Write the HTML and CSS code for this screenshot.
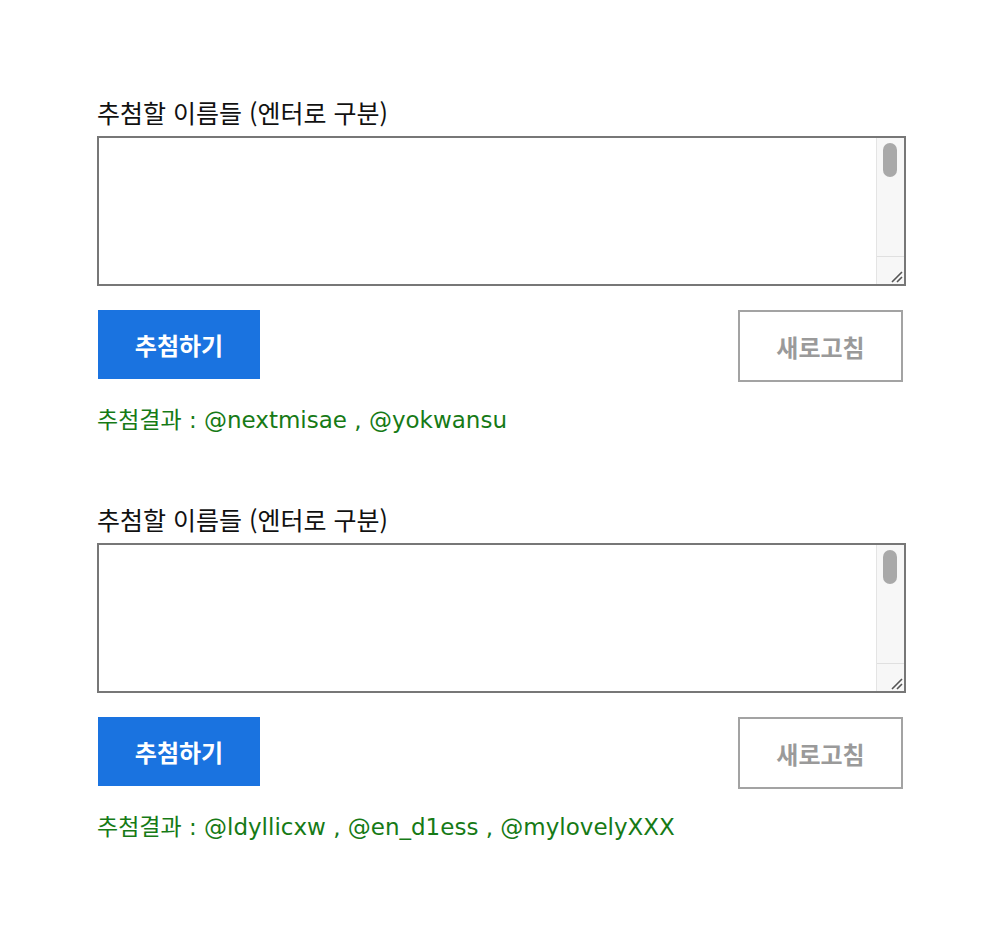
FILE: index.html
```html
<!DOCTYPE html>
<html lang="ko">
<head>
<meta charset="utf-8">
<title>추첨</title>
<link rel="stylesheet" href="styles.css">
</head>
<body>
<main class="page">
  <section class="block">
    <label class="label">추첨할 이름들 (엔터로 구분)</label>
    <div class="box">
      <textarea class="input"></textarea>
      <div class="scroll">
        <div class="track"><div class="thumb"></div></div>
        <div class="grip"><svg width="14" height="14" viewBox="0 0 14 14"><path d="M3 13 L13 3 M8 13 L13 8" stroke="#555" stroke-width="1.6" fill="none"/></svg></div>
      </div>
    </div>
    <div class="actions">
      <button class="draw">추첨하기</button>
      <button class="reset">새로고침</button>
    </div>
    <p class="result">추첨결과 : @nextmisae , @yokwansu</p>
  </section>
  <section class="block">
    <label class="label">추첨할 이름들 (엔터로 구분)</label>
    <div class="box">
      <textarea class="input"></textarea>
      <div class="scroll">
        <div class="track"><div class="thumb"></div></div>
        <div class="grip"><svg width="14" height="14" viewBox="0 0 14 14"><path d="M3 13 L13 3 M8 13 L13 8" stroke="#555" stroke-width="1.6" fill="none"/></svg></div>
      </div>
    </div>
    <div class="actions">
      <button class="draw">추첨하기</button>
      <button class="reset">새로고침</button>
    </div>
    <p class="result">추첨결과 : @ldyllicxw , @en_d1ess , @mylovelyXXX</p>
  </section>
</main>
</body>
</html>
```
FILE: styles.css
```css
html, body {
  margin: 0;
  padding: 0;
  background: #fff;
}
.page {
  padding: 94px 94px 0 97px;
  width: 809px;
  display: flex;
  flex-direction: column;
  gap: 63px;
  font-family: "Noto Sans CJK KR", "Noto Sans", sans-serif;
}
.block {
  display: flex;
  flex-direction: column;
}
.label {
  font-size: 25px;
  font-weight: 400;
  line-height: 36px;
  color: #111;
  margin-bottom: 6px;
}
.box {
  display: flex;
  height: 146px;
  border: 2px solid #777;
  background: #fff;
}
.input {
  flex: 1;
  border: none;
  outline: none;
  resize: none;
  margin: 0;
  padding: 0;
  background: transparent;
}
.scroll {
  width: 27px;
  display: flex;
  flex-direction: column;
  background: #f7f7f7;
  border-left: 1px solid #e4e4e4;
}
.track {
  flex: 1;
  padding: 5px 6px 0 6px;
}
.thumb {
  height: 34px;
  width: 14px;
  border-radius: 7px;
  background: #a9a9a9;
}
.grip {
  height: 26px;
  border-top: 1px solid #e0e0e0;
  display: flex;
  align-items: flex-end;
  justify-content: flex-end;
  padding: 0 1px 1px 0;
}
.actions {
  display: flex;
  justify-content: space-between;
  align-items: flex-start;
  margin-top: 24px;
  padding-right: 3px;
}
.draw {
  width: 162px;
  height: 69px;
  border: none;
  background: #1a73e0;
  color: #fff;
  font-family: "Noto Sans CJK KR", sans-serif;
  font-weight: 700;
  font-size: 24px;
  margin-left: 1px;
}
.reset {
  width: 165px;
  height: 72px;
  border: 2px solid #a3a3a3;
  background: #fff;
  color: #9a9a9a;
  font-family: "Noto Sans CJK KR", sans-serif;
  font-weight: 700;
  font-size: 24px;
}
.result {
  margin: 20px 0 0 0;
  font-family: "DejaVu Sans", "Noto Sans CJK KR", sans-serif;
  font-size: 23px;
  line-height: 36px;
  color: #167a16;
}
```
